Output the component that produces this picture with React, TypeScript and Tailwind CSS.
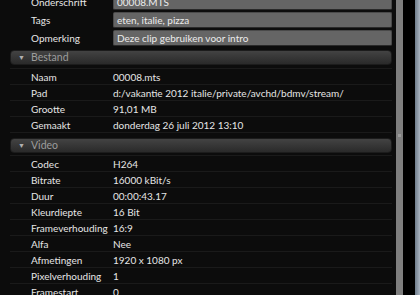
import React from "react";

const font = { fontFamily: "Lato, 'Open Sans', sans-serif" };

function FieldRow({ label, value }: { label: string; value: string }) {
  return (
    <div className="flex h-[18px] items-start">
      <div className="w-[103px] pl-[21px] h-[16px] flex items-center text-[#e6e6e6] whitespace-nowrap">{label}</div>
      <div className="flex-1 h-[16px] flex items-center pl-[3px] rounded-[2px] bg-[#656565] border border-[#4a4a4a] border-b-[#2a2a2a] text-[#ececec] whitespace-nowrap">
        {value}
      </div>
    </div>
  );
}

function Row({ label, value }: { label: string; value: string }) {
  return (
    <div className="flex h-[16px] items-center pt-[1px] border-b border-[#1a1a1a] text-[#e6e6e6]">
      <div className="w-[103px] pl-[21px] whitespace-nowrap">{label}</div>
      <div className="flex-1 whitespace-nowrap">{value}</div>
    </div>
  );
}

function Header({ title }: { title: string }) {
  return (
    <div className="h-[15px] flex items-center rounded-[4px] bg-gradient-to-b from-[#434343] to-[#2a2a2a] border border-[#1c1c1c] text-[#9c9c9c] text-[10.5px]">
      <span className="w-[20px] pl-[7px] text-[7px] text-[#b0b0b0]">▼</span>
      <span>{title}</span>
    </div>
  );
}

export default function App() {
  return (
    <div className="w-[420px] h-[295px] bg-black flex overflow-hidden text-[10px] leading-none" style={font}>
      <div className="w-[396px] h-full bg-[#0c0c0c] pl-[10px] pr-[4px] overflow-hidden">
        <div className="-mt-[6px] flex flex-col">
          <FieldRow label="Onderschrift" value="00008.MTS" />
          <FieldRow label="Tags" value="eten, italie, pizza" />
          <FieldRow label="Opmerking" value="Deze clip gebruiken voor intro" />
          <div className="h-[2px]" />
          <Header title="Bestand" />
          <div className="h-[4px] border-b border-[#1a1a1a]" />
          <Row label="Naam" value="00008.mts" />
          <Row label="Pad" value="d:/vakantie 2012 italie/private/avchd/bdmv/stream/" />
          <Row label="Grootte" value="91,01 MB" />
          <Row label="Gemaakt" value="donderdag 26 juli 2012 13:10" />
          <div className="h-[5px]" />
          <Header title="Video" />
          <div className="h-[3px] border-b border-[#1a1a1a]" />
          <Row label="Codec" value="H264" />
          <Row label="Bitrate" value="16000 kBit/s" />
          <Row label="Duur" value="00:00:43.17" />
          <Row label="Kleurdiepte" value="16 Bit" />
          <Row label="Frameverhouding" value="16:9" />
          <Row label="Alfa" value="Nee" />
          <Row label="Afmetingen" value="1920 x 1080 px" />
          <Row label="Pixelverhouding" value="1" />
          <Row label="Framestart" value="0" />
        </div>
      </div>
      <div className="w-[7px] h-full bg-[#7e7e7e] relative">
        <div className="absolute left-[2px] top-[134px] w-[3px] h-[3px] bg-[#9a9a9a]" />
      </div>
      <div className="w-[12px] h-full bg-black" />
      <div className="w-[5px] h-full bg-gradient-to-r from-[#6f7d8c] to-[#a9b4c0]" />
    </div>
  );
}
